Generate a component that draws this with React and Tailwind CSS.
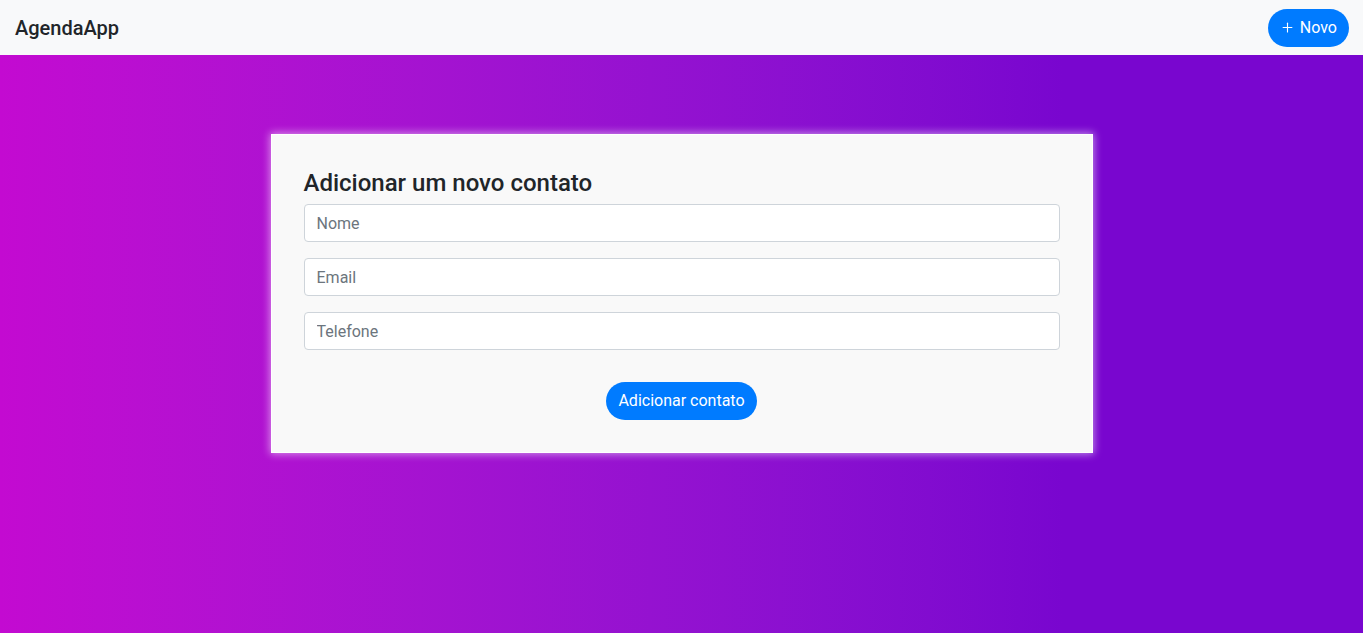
import React from "react";
import { Plus } from "lucide-react";

function App() {
  return (
    <div className="flex min-h-screen flex-col font-['Roboto',sans-serif]">
      {/* Navbar */}
      <nav className="flex h-[55px] items-center justify-between bg-[#f8f9fa] px-[15px] pr-[14px]">
        <span className="text-[20px] font-medium text-[#212529]">AgendaApp</span>
        <button className="flex h-[38px] items-center gap-[5px] rounded-full bg-[#007bff] px-[12px] text-[16px] text-white">
          <Plus className="h-[15px] w-[15px]" strokeWidth={1.75} />
          Novo
        </button>
      </nav>

      {/* Main content */}
      <main className="flex-1 bg-linear-to-r from-[#c30ad1] from-0% to-[#7906cf] to-78% pt-[79px]">
        <div className="mx-auto w-[822px] border border-white bg-[#f9f9f9] px-8 pt-[34px] pb-8 shadow-[0_0_8px_1px_rgba(255,255,255,0.55)]">
          <h4 className="mb-[6px] text-[24px] font-medium leading-[1.2] text-[#212529]">
            Adicionar um novo contato
          </h4>
          <form className="flex flex-col">
            <input
              placeholder="Nome"
              className="mb-4 h-[38px] rounded-[4px] border border-[#ced4da] bg-white px-3 pt-[1px] text-[16px] text-[#495057] placeholder:text-[#6c757d] outline-none"
            />
            <input
              placeholder="Email"
              className="mb-4 h-[38px] rounded-[4px] border border-[#ced4da] bg-white px-3 pt-[1px] text-[16px] text-[#495057] placeholder:text-[#6c757d] outline-none"
            />
            <input
              placeholder="Telefone"
              className="mb-4 h-[38px] rounded-[4px] border border-[#ced4da] bg-white px-3 pt-[1px] text-[16px] text-[#495057] placeholder:text-[#6c757d] outline-none"
            />
            <div className="mt-4 flex justify-center">
              <button
                type="button"
                className="h-[38px] rounded-full bg-[#007bff] px-[12px] pt-[1px] text-[16px] text-white"
              >
                Adicionar contato
              </button>
            </div>
          </form>
        </div>
      </main>
    </div>
  );
}

export default App;
